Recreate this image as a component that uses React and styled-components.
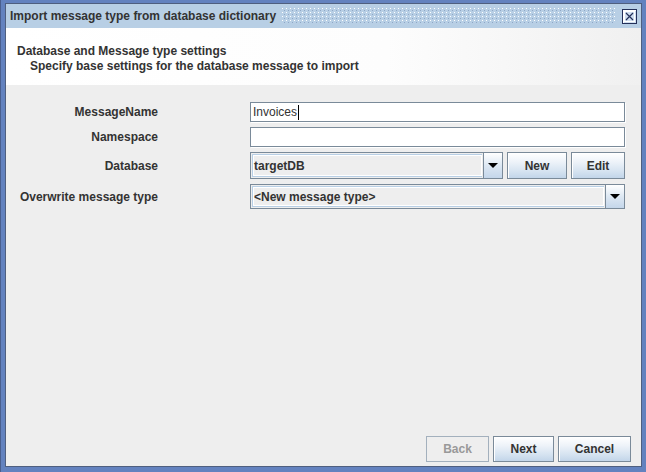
import React from 'react';
import styled, { createGlobalStyle } from 'styled-components';

const GlobalStyle = createGlobalStyle`
  html, body {
    margin: 0;
    padding: 0;
    background: #6382bf;
  }
  body {
    font-family: "Liberation Sans", Arial, sans-serif;
  }
`;

const Frame = styled.div`
  width: 646px;
  height: 472px;
  box-sizing: border-box;
  background: #6382bf;
  padding: 0 4px 5px 4px;
  display: flex;
  flex-direction: column;
  border-left: 1px solid #4a5f8e;
`;

const TitleBar = styled.div`
  height: 25px;
  margin-top: 3px;
  box-sizing: border-box;
  background: #b8cfe5;
  border-top: 1px solid #4f5f7f;
  border-left: 1px solid #4f5f7f;
  border-right: 1px solid #4f5f7f;
  display: flex;
  align-items: center;
  padding: 0 4px 0 4px;
  gap: 6px;
`;

const Title = styled.span`
  font-size: 12px;
  font-weight: bold;
  color: #333;
  white-space: nowrap;
`;

const Bumps = styled.div`
  flex: 1;
  height: 16px;
  background-color: #b8cfe5;
  background-image:
    radial-gradient(circle at 0.5px 0.5px, #ffffff 0.7px, transparent 0.8px),
    radial-gradient(circle at 0.5px 0.5px, #8fa8c8 0.7px, transparent 0.8px);
  background-size: 4px 4px, 4px 4px;
  background-position: 0 0, 2px 2px;
`;

const CloseButton = styled.div`
  width: 15px;
  height: 15px;
  box-sizing: border-box;
  border: 1px solid #25315a;
  box-shadow: inset 1px 1px 0 #ffffff;
  background: #d0dff0;
  display: flex;
  align-items: center;
  justify-content: center;
`;

const Client = styled.div`
  flex: 1;
  display: flex;
  flex-direction: column;
  background: #eeeeee;
  border: 1px solid #4f5f7f;
  border-top: none;
`;

const Header = styled.div`
  height: 57px;
  box-sizing: border-box;
  padding: 16px 0 0 11px;
  background: linear-gradient(to right, #ffffff 0%, #fdfdfd 60%, #f0f0f0 100%);
  font-size: 12px;
  font-weight: bold;
  color: #333;
  line-height: 15px;
`;

const SubTitle = styled.div`
  padding-left: 13px;
`;

const Form = styled.div`
  display: grid;
  grid-template-columns: 144px 375px;
  column-gap: 92px;
  row-gap: 5px;
  padding: 17px 0 0 8px;
  align-items: center;
`;

const Label = styled.div`
  text-align: right;
  white-space: nowrap;
  font-size: 12px;
  font-weight: bold;
  color: #333;
`;

const TextField = styled.div`
  height: 20px;
  box-sizing: border-box;
  background: #fff;
  border: 1px solid #7a8a99;
  box-shadow: 1px 1px 0 #ffffff;
  font-size: 12px;
  color: #333;
  display: flex;
  align-items: center;
  padding-left: 2px;
`;

const Caret = styled.span`
  display: inline-block;
  width: 1px;
  height: 15px;
  background: #000;
  margin-left: 1px;
`;

const Row = styled.div`
  display: flex;
  gap: 4px;
`;

const Combo = styled.div`
  flex: 1;
  height: ${(p) => p.$h}px;
  box-sizing: border-box;
  border: 1px solid #7a8a99;
  display: flex;
  background: #eeeeee;
`;

const ComboValue = styled.div`
  flex: 1;
  display: flex;
  align-items: center;
  padding-left: 1px;
  font-size: 12px;
  font-weight: bold;
  color: #333;
  box-shadow: inset 1px 1px 0 #ffffff, inset -1px -1px 0 #ffffff;
  margin: 1px;
  border: 1px solid #b8cfe5;
  border-right: none;
`;

const ArrowBox = styled.div`
  width: 18px;
  border-left: 1px solid #7a8a99;
  background: linear-gradient(to bottom, #ffffff 0%, #dde8f3 50%, #c4d6ea 100%);
  display: flex;
  align-items: center;
  justify-content: center;
`;

const Arrow = styled.div`
  width: 0;
  height: 0;
  border-left: 5px solid transparent;
  border-right: 5px solid transparent;
  border-top: 5px solid #000;
`;

const Button = styled.div`
  width: ${(p) => p.$w}px;
  height: ${(p) => p.$h || 26}px;
  box-sizing: border-box;
  border: 1px solid ${(p) => (p.$disabled ? '#a3b0bd' : '#7a8a99')};
  background: ${(p) =>
    p.$disabled
      ? '#eeeeee'
      : 'linear-gradient(to bottom, #ffffff 0%, #eef3f9 35%, #d4e2f0 75%, #c2d5e9 100%)'};
  box-shadow: ${(p) => (p.$disabled ? 'none' : 'inset 1px 1px 0 #ffffff')};
  font-size: 12px;
  font-weight: bold;
  color: ${(p) => (p.$disabled ? '#999999' : '#333')};
  display: flex;
  align-items: center;
  justify-content: center;
`;

const Spacer = styled.div`
  flex: 1;
`;

const Footer = styled.div`
  display: flex;
  justify-content: flex-end;
  gap: 4px;
  padding: 0 10px 4px 0;
`;

export default function App() {
  return (
    <>
      <GlobalStyle />
      <Frame>
        <TitleBar>
          <Title>Import message type from database dictionary</Title>
          <Bumps />
          <CloseButton>
            <svg width="11" height="11" viewBox="0 0 11 11">
              <rect x="0.5" y="0.5" width="10" height="10" fill="none" stroke="#ffffff" />
              <path d="M2 2 L9 9 M9 2 L2 9" stroke="#25315a" strokeWidth="1.2" />
            </svg>
          </CloseButton>
        </TitleBar>
        <Client>
          <Header>
            <div>Database and Message type settings</div>
            <SubTitle>Specify base settings for the database message to import</SubTitle>
          </Header>
          <Form>
            <Label>MessageName</Label>
            <TextField>
              Invoices
              <Caret />
            </TextField>
            <Label>Namespace</Label>
            <TextField />
            <Label>Database</Label>
            <Row>
              <Combo $h={27}>
                <ComboValue>targetDB</ComboValue>
                <ArrowBox>
                  <Arrow />
                </ArrowBox>
              </Combo>
              <Button $w={60} $h={27}>New</Button>
              <Button $w={54} $h={27}>Edit</Button>
            </Row>
            <Label>Overwrite message type</Label>
            <Combo $h={25}>
              <ComboValue>&lt;New message type&gt;</ComboValue>
              <ArrowBox>
                <Arrow />
              </ArrowBox>
            </Combo>
          </Form>
          <Spacer />
          <Footer>
            <Button $w={63} $disabled>Back</Button>
            <Button $w={61}>Next</Button>
            <Button $w={73}>Cancel</Button>
          </Footer>
        </Client>
      </Frame>
    </>
  );
}
